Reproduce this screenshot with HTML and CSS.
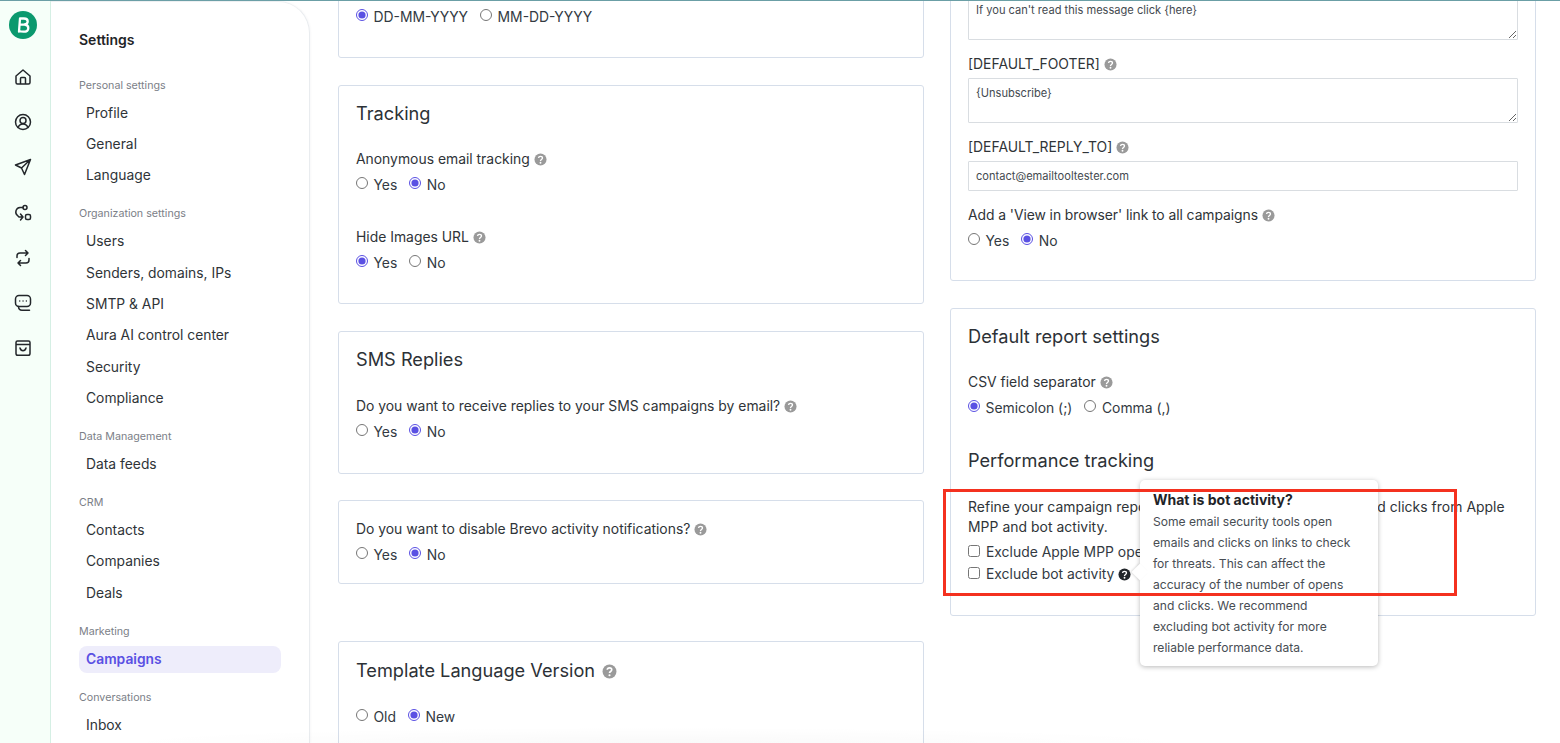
FILE: index.html
```html
<!DOCTYPE html>
<html lang="en">
<head>
<meta charset="utf-8">
<title>Settings</title>
<link rel="stylesheet" href="styles.css">
</head>
<body>
<svg class="defs" width="0" height="0" aria-hidden="true">
  <symbol id="help" viewBox="0 0 14 14">
    <circle cx="7" cy="7" r="6.5" fill="currentColor"/>
    <path d="M4.9 5.4C5 4.2 5.9 3.6 7 3.6c1.2 0 2.1.7 2.1 1.8 0 1.6-2.1 1.6-2.1 3.1" fill="none" stroke="#fff" stroke-width="1.5"/>
    <circle cx="7" cy="10.5" r="1" fill="#fff"/>
  </symbol>
</svg>
<div class="app">
  <nav class="rail">
    <svg class="logo" width="28" height="28" viewBox="0 0 28 28"><circle cx="14" cy="14" r="14" fill="#0b996e"/><path d="M10 20.500 11 7.500h4c2.300 0 3.700 1.100 3.700 2.900 0 1.600-1.100 2.700-3.200 3.100 2.300.3 3.800 1.400 3.800 3.400 0 2.400-2.100 3.800-4.800 3.800-1.600 0-3.200-.2-4.500-.7M10.800 13.600h4.600" fill="none" stroke="#fff" stroke-width="2.300" stroke-linecap="round" stroke-linejoin="round"/></svg>
    <div class="rail-icons">
      <svg class="ri" viewBox="0 0 18 18"><path d="M2 8 9 2l7 6v6.500A1.500 1.500 0 0 1 14.500 16h-11A1.500 1.500 0 0 1 2 14.500ZM6.500 16v-5.500A1 1 0 0 1 7.500 9.500h3a1 1 0 0 1 1 1V16"/></svg>
      <svg class="ri" viewBox="0 0 18 18"><circle cx="9" cy="9" r="7.500"/><circle cx="9" cy="7.500" r="3"/><path d="M4 14.500c1-2.300 2.800-3.500 5-3.500s4 1.200 5 3.500"/></svg>
      <svg class="ri" viewBox="0 0 18 18"><path d="M16.500 1.500 1.500 7l6 3 3 6.500Zm0 0-9 8.500"/></svg>
      <svg class="ri" viewBox="0 0 18 18"><circle cx="11" cy="3.500" r="2"/><rect x="11.500" y="10.500" width="5" height="5" rx="1.500"/><path d="M9 3.500H6A4.500 4.500 0 0 0 3.500 11.500L5 13h4M6.500 10 9 13l-2.500 3"/></svg>
      <svg class="ri" viewBox="0 0 18 18"><path d="M11.500 1.500 14 4l-2.500 2.500M14 4H6a3 3 0 0 0-3 3v1.500M6.500 16.500 4 14l2.500-2.500M4 14h8a3 3 0 0 0 3-3V9.500"/></svg>
      <svg class="ri" viewBox="0 0 18 18"><rect x="1.500" y="1.500" width="15" height="11" rx="3.500"/><path d="M4.500 12.500c0 2.500 1.500 3.700 3.500 3.700h7.500"/><path class="dots" d="M5.700 7h.1M9 7h.1M12.300 7h.1"/></svg>
      <svg class="ri" viewBox="0 0 18 18"><path d="M3.500 2h11a1.500 1.500 0 0 1 1.500 1.500v11a1.800 1.800 0 0 1-1.800 1.800H3.800A1.800 1.800 0 0 1 2 14.500v-11A1.500 1.500 0 0 1 3.500 2ZM2 5.500h14M6 9c.5 1.800 1.700 2.700 3 2.700S11.500 10.800 12 9"/></svg>
    </div>
  </nav>

  <aside class="sidebar">
    <div class="side-title">Settings</div>
    <div class="side-group">Personal settings</div>
    <a class="side-item">Profile</a>
    <a class="side-item">General</a>
    <a class="side-item">Language</a>
    <div class="side-group">Organization settings</div>
    <a class="side-item">Users</a>
    <a class="side-item">Senders, domains, IPs</a>
    <a class="side-item">SMTP &amp; API</a>
    <a class="side-item">Aura AI control center</a>
    <a class="side-item">Security</a>
    <a class="side-item">Compliance</a>
    <div class="side-group">Data Management</div>
    <a class="side-item">Data feeds</a>
    <div class="side-group">CRM</div>
    <a class="side-item">Contacts</a>
    <a class="side-item">Companies</a>
    <a class="side-item">Deals</a>
    <div class="side-group">Marketing</div>
    <a class="side-item active">Campaigns</a>
    <div class="side-group">Conversations</div>
    <a class="side-item">Inbox</a>
  </aside>

  <main class="content">
    <div class="col col-left">
      <section class="card card-date">
        <div class="row">
          <label class="opt"><input type="radio" name="date" checked>DD-MM-YYYY</label>
          <label class="opt"><input type="radio" name="date">MM-DD-YYYY</label>
        </div>
      </section>

      <section class="card card-track">
        <h2 class="card-title">Tracking</h2>
        <div class="label first">Anonymous email tracking <svg class="help"><use href="#help"/></svg></div>
        <div class="row">
          <label class="opt"><input type="radio" name="anon">Yes</label>
          <label class="opt"><input type="radio" name="anon" checked>No</label>
        </div>
        <div class="label spaced">Hide Images URL <svg class="help"><use href="#help"/></svg></div>
        <div class="row">
          <label class="opt"><input type="radio" name="hide" checked>Yes</label>
          <label class="opt"><input type="radio" name="hide">No</label>
        </div>
      </section>

      <section class="card card-sms">
        <h2 class="card-title">SMS Replies</h2>
        <div class="label first">Do you want to receive replies to your SMS campaigns by email? <svg class="help"><use href="#help"/></svg></div>
        <div class="row">
          <label class="opt"><input type="radio" name="sms">Yes</label>
          <label class="opt"><input type="radio" name="sms" checked>No</label>
        </div>
      </section>

      <section class="card card-notif">
        <div class="label">Do you want to disable Brevo activity notifications? <svg class="help"><use href="#help"/></svg></div>
        <div class="row">
          <label class="opt"><input type="radio" name="notif">Yes</label>
          <label class="opt"><input type="radio" name="notif" checked>No</label>
        </div>
      </section>

      <section class="card card-tpl">
        <h2 class="card-title">Template Language Version <svg class="help help-lg"><use href="#help"/></svg></h2>
        <div class="row row-tpl">
          <label class="opt"><input type="radio" name="tpl">Old</label>
          <label class="opt"><input type="radio" name="tpl" checked>New</label>
        </div>
      </section>
    </div>

    <div class="col col-right">
      <section class="card card-defaults">
        <textarea class="field area" readonly>If you can't read this message click {here}</textarea>
        <div class="label field-label">[DEFAULT_FOOTER] <svg class="help"><use href="#help"/></svg></div>
        <textarea class="field area" readonly>{Unsubscribe}</textarea>
        <div class="label field-label">[DEFAULT_REPLY_TO] <svg class="help"><use href="#help"/></svg></div>
        <input class="field line" type="text" value="contact@emailtooltester.com" readonly>
        <div class="label field-label view-label">Add a 'View in browser' link to all campaigns <svg class="help"><use href="#help"/></svg></div>
        <div class="row">
          <label class="opt"><input type="radio" name="view">Yes</label>
          <label class="opt"><input type="radio" name="view" checked>No</label>
        </div>
      </section>

      <section class="card card-report">
        <h2 class="card-title">Default report settings</h2>
        <div class="label first">CSV field separator <svg class="help"><use href="#help"/></svg></div>
        <div class="row">
          <label class="opt"><input type="radio" name="csv" checked>Semicolon (;)</label>
          <label class="opt"><input type="radio" name="csv">Comma (,)</label>
        </div>
        <h2 class="card-title perf">Performance tracking</h2>
        <p class="desc">Refine your campaign reports by excluding spurious opens and clicks from Apple MPP and bot activity.</p>
        <label class="check"><input type="checkbox">Exclude Apple MPP opens</label>
        <label class="check"><input type="checkbox">Exclude bot activity <svg class="help help-dark"><use href="#help"/></svg></label>
      </section>
    </div>
  </main>
</div>

<div class="tooltip">
  <div class="tip-title">What is bot activity?</div>
  <p class="tip-body">Some email security tools open emails and clicks on links to check for threats. This can affect the accuracy of the number of opens and clicks. We recommend excluding bot activity for more reliable performance data.</p>
</div>
<div class="highlight"></div>
</body>
</html>
```

FILE: styles.css
```css
* { box-sizing: border-box; }
html, body { margin: 0; height: 743px; overflow: hidden; }
body {
  position: relative;
  background: #fff;
  border-top: 1px solid #6b9fa6;
  font-family: Inter, "Liberation Sans", sans-serif;
  font-size: 13.900px;
  color: #333a42;
}
body::after {
  content: "";
  position: absolute;
  left: 100px;
  right: 350px;
  bottom: 0;
  height: 16px;
  background: radial-gradient(ellipse 50% 100% at 50% 100%, rgba(0, 0, 0, .022), rgba(0, 0, 0, 0));
  pointer-events: none;
}
.defs { position: absolute; }

.app { display: flex; height: 742px; overflow: hidden; }

.rail {
  flex: 0 0 51px;
  background: #f6fff9;
  border-right: 1px solid #d5efe4;
  padding: 10px 5px 0 0;
  display: flex;
  flex-direction: column;
  align-items: center;
}
.logo { display: block; margin-left: 1px; }
.rail-icons { display: flex; flex-direction: column; gap: 27.200px; margin-top: 29px; }
.ri {
  display: block;
  width: 18px;
  height: 18px;
  fill: none;
  stroke: #23272b;
  stroke-width: 1.500;
  stroke-linecap: round;
  stroke-linejoin: round;
}
.ri .dots { stroke-width: 1.300; }

.sidebar {
  flex: 0 0 259px;
  padding: 27px 0 0 28px;
  border-right: 1px solid #e9ecef;
  border-top-right-radius: 32px;
  border-top: 1px solid #eef0f2;
  box-shadow: 1px 0 2px rgba(20, 40, 60, .03);
  display: flex;
  flex-direction: column;
  align-items: flex-start;
}
.side-title { font-weight: 600; font-size: 14px; line-height: 22px; color: #1f2428; margin-bottom: 26.700px; }
.side-group { font-size: 10.700px; line-height: 16px; height: 16px; color: #7b8087; margin: 0 0 6px; }
.side-item + .side-group { margin-top: 12.670px; }
.side-item {
  display: block;
  width: 202px;
  height: 27px;
  line-height: 27px;
  margin-bottom: 4.330px;
  padding-left: 7px;
  font-size: 13.850px;
  color: #2f3438;
  border-radius: 8px;
}
.side-item.active { background: #eeedfb; color: #5a50e3; font-weight: 600; }

.content {
  flex: 1;
  display: grid;
  grid-template-columns: 586px 586px;
  column-gap: 26px;
  padding-left: 28px;
  align-items: start;
}
.col { display: flex; flex-direction: column; gap: 27px; }
.col-left { margin-top: -41px; }
.col-right { margin-top: -42px; }

.card {
  border: 1px solid #d6deea;
  border-radius: 3px;
  padding: 13px 18px 29px 17px;
  background: #fff;
}
.card-date { padding-top: 40px; padding-bottom: 28px; }
.card-track { padding-bottom: 28px; }
.card-sms { margin-bottom: -1px; }
.card-sms .label.first { margin-top: 23px; }
.card-notif { padding-top: 18px; padding-bottom: 16px; margin-bottom: 30px; }
.card-tpl { padding-top: 14px; }
.card-defaults { padding-top: 35px; padding-bottom: 27px; }
.card-report { padding-bottom: 30px; }

.card-title { margin: 0; font-weight: 400; font-size: 18.200px; line-height: 28px; color: #2c3136; }
.label { line-height: 20px; color: #2f3438; }
.label.first { margin-top: 22px; }
.label.spaced { margin-top: 30px; }
.field-label { margin-top: 14px; margin-bottom: 4px; }
.view-label { letter-spacing: -.07px; }
.row { display: flex; gap: 12px; height: 24px; margin-top: 4px; line-height: 24px; }
.field-label + .row { margin-top: 2px; }
.row-tpl { margin-top: 21px; }

.opt { display: inline-flex; align-items: flex-start; gap: 5.500px; }
.opt input { margin: 3.500px 0 0; width: 12px; height: 12px; accent-color: #5a50e3; }

.help { width: 13px; height: 13px; vertical-align: -2px; color: #9a9a9a; margin-left: 0; }
.help-lg { width: 15px; height: 15px; margin-left: 2px; }

.field {
  display: block;
  width: 550px;
  border: 1px solid #d9dde1;
  border-radius: 1px;
  background: #fff;
  padding: 7px 7px;
  font-family: Inter, "Liberation Sans", sans-serif;
  font-size: 11.100px;
  color: #444a50;
  outline: none;
}
.area { height: 45px; resize: vertical; }
.line { height: 30px; }

.perf { margin-top: 26px; }
.desc { margin: 23px 0 4px; line-height: 20px; letter-spacing: .05px; color: #2f3438; }
.check { display: flex; align-items: flex-start; gap: 6px; height: 22px; line-height: 22px; }
.check input { margin: 4px 0 0; width: 12px; height: 12px; }
.help-dark { color: #23272b; margin: 5px 0 0 -2px; }

.tooltip {
  position: absolute;
  left: 1140px;
  top: 479px;
  width: 238px;
  height: 186px;
  padding: 10px 13px;
  background: #fff;
  border-radius: 5px;
  box-shadow: 0 1px 5px rgba(0, 0, 0, .28);
}
.tooltip::before {
  content: "";
  position: absolute;
  left: -6px;
  top: 86px;
  width: 12px;
  height: 12px;
  background: #fff;
  transform: rotate(45deg);
  box-shadow: -1px 1px 2px rgba(0, 0, 0, .12);
}
.tip-title { position: relative; font-weight: 700; font-size: 14px; line-height: 20px; color: #1f2428; }
.tip-body { position: relative; margin: 1px 0 0; font-size: 12.100px; line-height: 21px; color: #474d53; }

.highlight {
  position: absolute;
  left: 943px;
  top: 488px;
  width: 514px;
  height: 107px;
  border: 3px solid #f4311f;
  pointer-events: none;
}
```
